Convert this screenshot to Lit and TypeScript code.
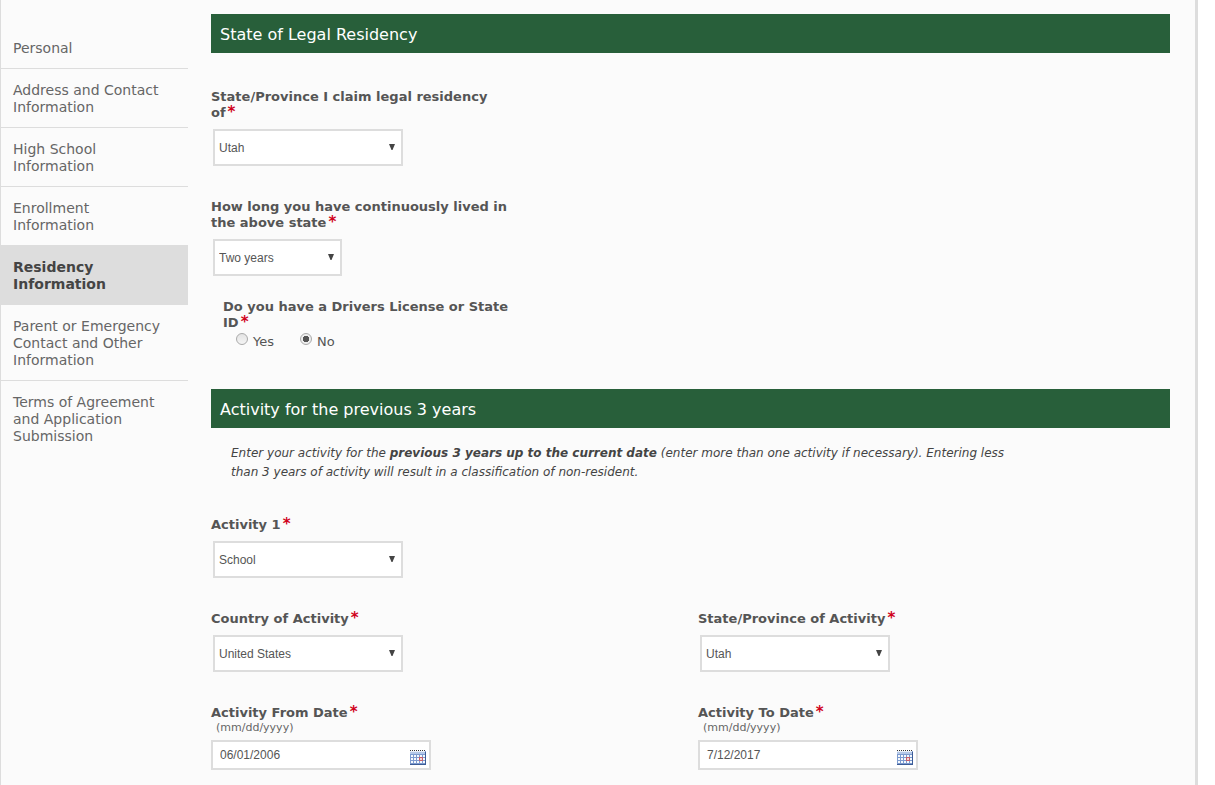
import { LitElement, html, css, svg } from "lit";
import { customElement, property } from "lit/decorators.js";
import { classMap } from "lit/directives/class-map.js";

const fieldLabel = css`
  :host {
    display: block;
  }
  .label {
    display: block;
    max-width: 300px;
    font-size: 13px;
    font-weight: bold;
    line-height: 16px;
    color: #555;
  }
  .required {
    margin-left: 2px;
    font-size: 15px;
    line-height: 1;
    color: #d0021b;
  }
`;

@customElement("select-field")
class SelectField extends LitElement {
  @property() label = "";
  @property() value = "";
  @property({ type: Array }) options: string[] = [];
  @property({ type: Boolean }) narrow = false;

  static styles = [
    fieldLabel,
    css`
      .select {
        display: block;
        box-sizing: border-box;
        width: 190px;
        height: 37px;
        margin: 8px 0 0 2px;
        padding: 0 20px 0 4px;
        border: 2px solid #ddd;
        border-radius: 0;
        appearance: none;
        font: 12px "Liberation Sans", Arial, sans-serif;
        color: #555;
        background: #fff
          url("data:image/svg+xml,%3Csvg xmlns='http://www.w3.org/2000/svg' width='6' height='6'%3E%3Cpath d='M0 0h6L3.5 6h-1z' fill='%23444'/%3E%3C/svg%3E")
          no-repeat right 6px top 13px;
      }
      .narrow {
        width: 129px;
      }
    `,
  ];

  render() {
    return html`
      <label class="label" for="control">${this.label}<span class="required">*</span></label>
      <select id="control" class=${classMap({ select: true, narrow: this.narrow })}>
        ${this.options.map((o) => html`<option ?selected=${o === this.value}>${o}</option>`)}
      </select>
    `;
  }
}

@customElement("date-field")
class DateField extends LitElement {
  @property() label = "";
  @property() value = "";

  static styles = [
    fieldLabel,
    css`
      .hint {
        display: block;
        padding-left: 5px;
        font-size: 11px;
        line-height: 13px;
        color: #666;
      }
      .box {
        display: flex;
        align-items: center;
        box-sizing: border-box;
        width: 220px;
        height: 30px;
        margin-top: 6px;
        padding: 0 3px 0 7px;
        border: 2px solid #ddd;
        background: #fff;
      }
      .input {
        flex: 1;
        min-width: 0;
        padding: 0;
        border: 0;
        outline: 0;
        background: none;
        font: 12px "Liberation Sans", Arial, sans-serif;
        color: #555;
      }
      .picker {
        display: block;
        padding: 5px 0 0;
        border: 0;
        background: none;
      }
      .calendar {
        display: block;
      }
    `,
  ];

  render() {
    const holes = [1, 3, 5, 7, 9, 11, 13, 15];
    const cols = [1, 4, 7, 10, 13];
    const rows = [5, 8, 11];
    return html`
      <label class="label" for="control">${this.label}<span class="required">*</span></label>
      <span class="hint" id="hint">(mm/dd/yyyy)</span>
      <div class="box">
        <input id="control" class="input" type="text" aria-describedby="hint" .value=${this.value} />
        <button class="picker" type="button" aria-label="Choose date">
          <svg class="calendar" width="16" height="15" viewBox="0 0 16 15" shape-rendering="crispEdges">
            <rect y="1" width="16" height="14" fill="#7d9bcf" />
            <rect y="1" width="15" height="1" fill="#e8eef8" />
            <rect y="2" width="15" height="2" fill="#b4c8e8" />
            ${holes.map((x) => svg`<rect x=${x - 1} y="0" width="1" height="1" fill="#333" />`)}
            ${rows.map((y) =>
              cols.map((x) => svg`<rect x=${x} y=${y} width="2" height="2" fill="#f6f9fd" />`)
            )}
            <rect x="9" y="7" width="4" height="4" fill="#c8606a" />
            <rect x="10" y="8" width="2" height="2" fill="#f5d8d8" />
            <path d="M15.5 2v13" fill="none" stroke="#3d5c96" />
            <path d="M0 14.5h16" fill="none" stroke="#3d5c96" />
          </svg>
        </button>
      </div>
    `;
  }
}

@customElement("app-root")
class AppRoot extends LitElement {
  static styles = css`
    :host {
      display: block;
      padding-right: 17px;
      background: #fff;
      font-family: Verdana, "DejaVu Sans", sans-serif;
      color: #555;
    }
    .page {
      display: flex;
      box-sizing: border-box;
      min-height: 100vh;
      border-left: 1px solid #ddd;
      border-right: 3px solid #ddd;
      background: #fbfbfb;
    }
    .nav {
      flex: none;
      width: 187px;
      padding-top: 27px;
    }
    .item {
      display: block;
      padding: 13px 20px 11px 12px;
      border-bottom: 1px solid #ddd;
      font-size: 14px;
      line-height: 17px;
      color: #666;
      text-decoration: none;
    }
    .item:last-child {
      border-bottom: 0;
    }
    .current {
      font-weight: bold;
      color: #444;
      background: #ddd;
    }
    .main {
      flex: 1;
      min-width: 0;
      padding: 14px 25px 15px 23px;
    }
    .heading {
      margin: 0;
      padding: 2px 9px 0;
      font-size: 16px;
      font-weight: normal;
      line-height: 37px;
      color: #fff;
      background: #285f3a;
    }
    .fields {
      display: grid;
      grid-template-columns: 1fr 1fr;
      gap: 33px 15px;
      padding-top: 36px;
    }
    .after-note {
      padding-top: 35px;
    }
    .wide {
      grid-column: 1 / -1;
    }
    .license {
      margin: 23px 0 39px 12px;
      padding: 0;
      border: 0;
    }
    .question {
      max-width: 290px;
      padding: 0;
      font-size: 13px;
      font-weight: bold;
      line-height: 16px;
    }
    .required {
      margin-left: 2px;
      font-size: 15px;
      line-height: 1;
      color: #d0021b;
    }
    .choices {
      display: flex;
      gap: 26px;
      padding: 2px 0 0 13px;
    }
    .choice {
      display: flex;
      align-items: flex-start;
      gap: 5px;
      font-size: 13px;
      line-height: 17px;
    }
    .radio {
      box-sizing: border-box;
      width: 12px;
      height: 12px;
      margin: 0;
      border: 1px solid #aaa;
      border-radius: 50%;
      appearance: none;
      background: linear-gradient(#e4e4e4, #f4f4f4);
    }
    .radio:checked {
      background: radial-gradient(circle, #555 0 3px, #eee 3px);
    }
    .note {
      max-width: 790px;
      margin: 16px 0 0 20px;
      font-size: 12px;
      font-style: italic;
      line-height: 19px;
      color: #444;
    }
  `;

  private sections = [
    "Personal",
    "Address and Contact Information",
    "High School Information",
    "Enrollment Information",
    "Residency Information",
    "Parent or Emergency Contact and Other Information",
    "Terms of Agreement and Application Submission",
  ];

  render() {
    return html`
      <div class="page">
        <nav class="nav">
          ${this.sections.map(
            (s) => html`<a href="#" class=${classMap({ item: true, current: s === "Residency Information" })}>${s}</a>`
          )}
        </nav>
        <main class="main">
          <h2 class="heading">State of Legal Residency</h2>
          <div class="fields">
            <select-field class="wide" label="State/Province I claim legal residency of" value="Utah" .options=${["Utah"]}></select-field>
            <select-field class="wide" narrow label="How long you have continuously lived in the above state" value="Two years" .options=${["Two years"]}></select-field>
          </div>
          <fieldset class="license">
            <legend class="question">Do you have a Drivers License or State ID<span class="required">*</span></legend>
            <div class="choices">
              <label class="choice"><input class="radio" type="radio" name="license" />Yes</label>
              <label class="choice"><input class="radio" type="radio" name="license" checked />No</label>
            </div>
          </fieldset>
          <h2 class="heading">Activity for the previous 3 years</h2>
          <p class="note">
            Enter your activity for the <strong>previous 3 years up to the current date</strong> (enter more than one
            activity if necessary). Entering less than 3 years of activity will result in a classification of
            non-resident.
          </p>
          <div class="fields after-note">
            <select-field class="wide" label="Activity 1" value="School" .options=${["School"]}></select-field>
            <select-field label="Country of Activity" value="United States" .options=${["United States"]}></select-field>
            <select-field label="State/Province of Activity" value="Utah" .options=${["Utah"]}></select-field>
            <date-field label="Activity From Date" value="06/01/2006"></date-field>
            <date-field label="Activity To Date" value="7/12/2017"></date-field>
          </div>
        </main>
      </div>
    `;
  }
}
